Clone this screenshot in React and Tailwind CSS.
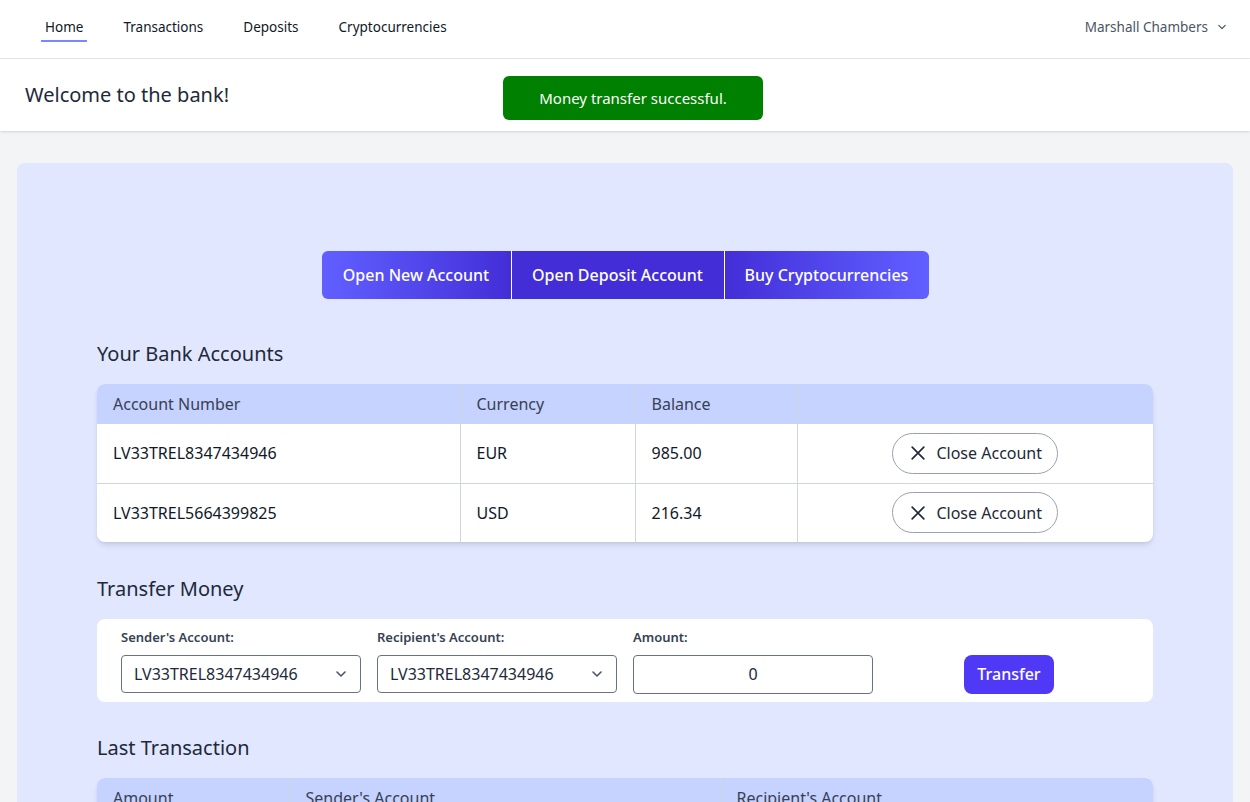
import React from "react";

const font = { fontFamily: '"Noto Sans", "Liberation Sans", sans-serif' };

function Chevron({ className }) {
  return (
    <svg viewBox="0 0 20 20" className={className} fill="none" aria-hidden="true">
      <path d="M6 8l4 4 4-4" stroke="currentColor" strokeWidth="1.6" strokeLinecap="round" strokeLinejoin="round" />
    </svg>
  );
}

function SelectBox({ value }) {
  return (
    <div className="relative">
      <select
        defaultValue={value}
        className="h-[38px] w-full appearance-none rounded border border-gray-500 bg-white pl-3 pr-8 text-base text-gray-800"
      >
        <option>LV33TREL8347434946</option>
        <option>LV33TREL5664399825</option>
      </select>
      <Chevron className="pointer-events-none absolute right-[10px] top-[9px] h-5 w-5 text-gray-600" />
    </div>
  );
}

export default function App() {
  const accounts = [
    { number: "LV33TREL8347434946", currency: "EUR", balance: "985.00" },
    { number: "LV33TREL5664399825", currency: "USD", balance: "216.34" },
  ];

  return (
    <div className="min-h-screen bg-gray-100" style={font}>
      {/* Nav */}
      <nav className="flex h-[59px] items-center justify-between border-b border-gray-200 bg-white pb-1 pl-[41px] pr-[20px]">
        <div className="flex items-center gap-8 text-[13.5px] text-gray-900">
          <a className="border-b-2 border-indigo-400 px-1 pb-[3px] pt-[5px]">Home</a>
          <a className="px-1">Transactions</a>
          <a className="px-1">Deposits</a>
          <a className="px-1">Cryptocurrencies</a>
        </div>
        <button type="button" className="flex items-center gap-[6px] text-[13.5px] text-gray-600">
          Marshall Chambers
          <Chevron className="h-4 w-4" />
        </button>
      </nav>

      {/* Header */}
      <header className="flex h-[72px] items-center bg-white px-[25px] shadow">
        <h1 className="w-[478px] text-xl text-gray-800">Welcome to the bank!</h1>
        <div className="mt-[6px] flex h-11 w-[260px] items-center justify-center rounded-md bg-[#008000] text-[15px] text-white">
          Money transfer successful.
        </div>
      </header>

      <main className="px-[17px] pt-8 pb-8">
        <div className="rounded-lg bg-indigo-100 px-20 pt-[88px] pb-10">
          {/* Actions */}
          <div className="flex justify-center">
            <div className="flex h-12 overflow-hidden rounded-md text-base font-medium text-white">
              <button type="button" className="w-[189px] bg-gradient-to-r from-indigo-500 to-indigo-700">
                Open New Account
              </button>
              <button type="button" className="w-[213px] border-l border-white bg-indigo-700">
                Open Deposit Account
              </button>
              <button type="button" className="w-[205px] border-l border-white bg-gradient-to-r from-indigo-700 to-indigo-500">
                Buy Cryptocurrencies
              </button>
            </div>
          </div>

          {/* Bank accounts */}
          <h2 className="mt-[41px] text-xl text-gray-800">Your Bank Accounts</h2>
          <div className="mt-4 overflow-hidden rounded-lg bg-white shadow-md">
            <table className="w-full table-fixed border-collapse text-base">
              <thead className="bg-indigo-200 text-gray-700">
                <tr className="h-10 text-left">
                  <th className="w-[363px] px-4 font-normal">Account Number</th>
                  <th className="w-[175px] border-l border-gray-300 px-4 font-normal">Currency</th>
                  <th className="w-[162px] border-l border-gray-300 px-4 font-normal">Balance</th>
                  <th className="border-l border-gray-300 px-4 font-normal"></th>
                </tr>
              </thead>
              <tbody className="text-gray-900">
                {accounts.map((a, i) => (
                  <tr key={a.number} className={i > 0 ? "h-[59px] border-t border-gray-300" : "h-[59px]"}>
                    <td className="px-4">{a.number}</td>
                    <td className="border-l border-gray-300 px-4">{a.currency}</td>
                    <td className="border-l border-gray-300 px-4">{a.balance}</td>
                    <td className="border-l border-gray-300 px-4 text-center">
                      <button
                        type="button"
                        className="inline-flex h-[41px] w-[166px] items-center justify-center gap-2 rounded-full border border-gray-400 text-gray-800"
                      >
                        <svg viewBox="0 0 24 24" className="h-5 w-5" fill="none" aria-hidden="true">
                          <path d="M5 5l14 14M19 5L5 19" stroke="currentColor" strokeWidth="2" strokeLinecap="round" />
                        </svg>
                        Close Account
                      </button>
                    </td>
                  </tr>
                ))}
              </tbody>
            </table>
          </div>

          {/* Transfer */}
          <h2 className="mt-[33px] text-xl text-gray-800">Transfer Money</h2>
          <div className="mt-4 rounded-lg bg-white px-6 pt-[9px] pb-[8px]">
            <div className="grid grid-cols-4 gap-x-4">
              <label className="text-[13px] font-semibold text-gray-700">Sender's Account:</label>
              <label className="text-[13px] font-semibold text-gray-700">Recipient's Account:</label>
              <label className="text-[13px] font-semibold text-gray-700">Amount:</label>
              <div></div>
              <div className="mt-[7px]"><SelectBox value="LV33TREL8347434946" /></div>
              <div className="mt-[7px]"><SelectBox value="LV33TREL8347434946" /></div>
              <div className="mt-[7px]">
                <input
                  defaultValue="0"
                  className="h-[39px] w-full rounded border border-gray-500 bg-white text-center text-base text-gray-800"
                />
              </div>
              <div className="mt-[7px] flex justify-center">
                <button type="button" className="h-[39px] w-[90px] rounded-lg bg-indigo-600 text-base font-medium text-white">
                  Transfer
                </button>
              </div>
            </div>
          </div>

          {/* Last transaction */}
          <h2 className="mt-8 text-xl text-gray-800">Last Transaction</h2>
          <div className="mt-4 overflow-hidden rounded-lg bg-white shadow-md">
            <table className="w-full table-fixed border-collapse text-base">
              <thead className="bg-indigo-200 text-gray-700">
                <tr className="h-10 text-left">
                  <th className="w-[192px] px-4 font-normal">Amount</th>
                  <th className="w-[431px] border-l border-gray-300 px-4 font-normal">Sender's Account</th>
                  <th className="border-l border-gray-300 px-4 font-normal">Recipient's Account</th>
                </tr>
              </thead>
              <tbody className="text-gray-900">
                <tr className="h-[59px]">
                  <td className="px-4">25.00</td>
                  <td className="border-l border-gray-300 px-4">LV33TREL8347434946</td>
                  <td className="border-l border-gray-300 px-4">LV33TREL5664399825</td>
                </tr>
              </tbody>
            </table>
          </div>
        </div>
      </main>
    </div>
  );
}
